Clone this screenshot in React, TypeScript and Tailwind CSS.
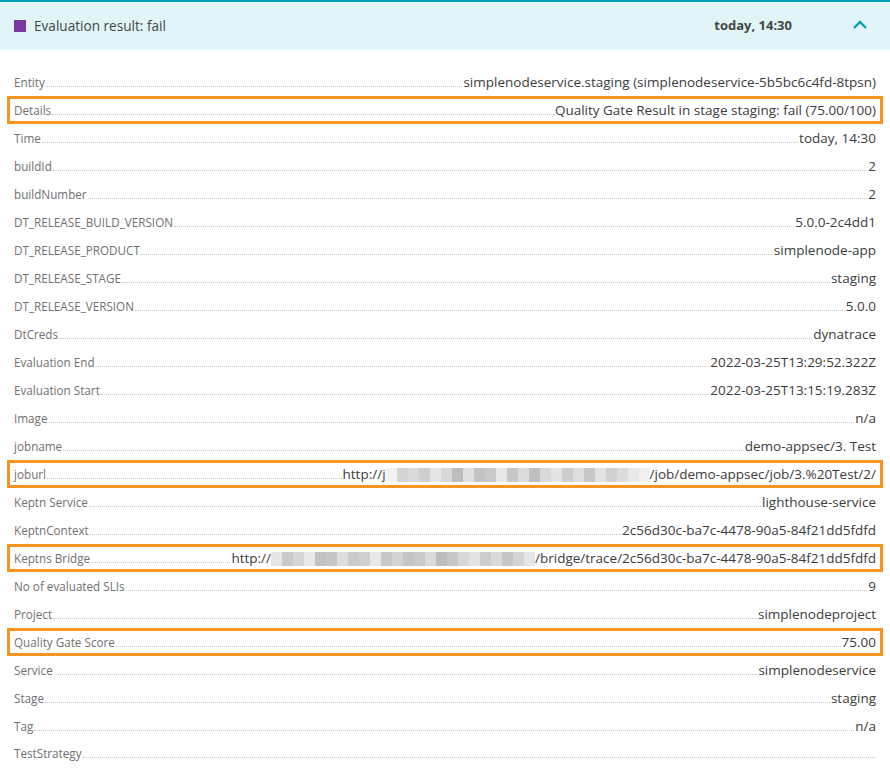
import React from 'react';

type Row = { label: string; value: React.ReactNode; hl?: boolean };

// pixelated stand-in for the redacted host name
const Redacted: React.FC<{ shades: string[] }> = ({ shades }) => (
  <span className="inline-flex h-[14px] align-middle">
    {shades.map((c, i) => (
      <span key={i} className="h-full w-[11px]" style={{ background: c }} />
    ))}
  </span>
);

const jobShades = ['#f2f2f2', '#d4d4d4', '#dadada', '#cfcfcf', '#e6e6e6', '#d8d8d8', '#bdbdbd', '#e0e0e0', '#c4c4c4', '#c9c9c9', '#e8e8e8', '#c7c7c7', '#dcdcdc', '#bfbfbf', '#d9d9d9', '#e4e4e4', '#cdcdcd', '#dddddd', '#c8c8c8', '#e2e2e2', '#d1d1d1', '#dcdcdc', '#e9e9e9', '#f0f0f0'];
const bridgeShades = ['#e6e6e6', '#c9c9c9', '#d6d6d6', '#e9e9e9', '#c2c2c2', '#c6c6c6', '#dedede', '#cbcbcb', '#cfcfcf', '#e8e8e8', '#c8c8c8', '#d3d3d3', '#c5c5c5', '#cacaca', '#dadada', '#bdbdbd', '#c7c7c7', '#d8d8d8', '#e3e3e3', '#cdcdcd', '#d9d9d9', '#c6c6c6', '#d4d4d4', '#e6e6e6'];

const rows: Row[] = [
  { label: 'Entity', value: 'simplenodeservice.staging (simplenodeservice-5b5bc6c4fd-8tpsn)' },
  { label: 'Details', value: 'Quality Gate Result in stage staging: fail (75.00/100)', hl: true },
  { label: 'Time', value: 'today, 14:30' },
  { label: 'buildId', value: '2' },
  { label: 'buildNumber', value: '2' },
  { label: 'DT_RELEASE_BUILD_VERSION', value: '5.0.0-2c4dd1' },
  { label: 'DT_RELEASE_PRODUCT', value: 'simplenode-app' },
  { label: 'DT_RELEASE_STAGE', value: 'staging' },
  { label: 'DT_RELEASE_VERSION', value: '5.0.0' },
  { label: 'DtCreds', value: 'dynatrace' },
  { label: 'Evaluation End', value: '2022-03-25T13:29:52.322Z' },
  { label: 'Evaluation Start', value: '2022-03-25T13:15:19.283Z' },
  { label: 'Image', value: 'n/a' },
  { label: 'jobname', value: 'demo-appsec/3. Test' },
  {
    label: 'joburl',
    hl: true,
    value: (
      <>
        http://j<Redacted shades={jobShades} />/job/demo-appsec/job/3.%20Test/2/
      </>
    ),
  },
  { label: 'Keptn Service', value: 'lighthouse-service' },
  { label: 'KeptnContext', value: '2c56d30c-ba7c-4478-90a5-84f21dd5fdfd' },
  {
    label: 'Keptns Bridge',
    hl: true,
    value: (
      <>
        http://<Redacted shades={bridgeShades} />/bridge/trace/2c56d30c-ba7c-4478-90a5-84f21dd5fdfd
      </>
    ),
  },
  { label: 'No of evaluated SLIs', value: '9' },
  { label: 'Project', value: 'simplenodeproject' },
  { label: 'Quality Gate Score', value: '75.00', hl: true },
  { label: 'Service', value: 'simplenodeservice' },
  { label: 'Stage', value: 'staging' },
  { label: 'Tag', value: 'n/a' },
  { label: 'TestStrategy', value: '' },
];

export default function App() {
  return (
    <div className="w-[890px] h-[769px] bg-white overflow-hidden" style={{ fontFamily: '"Open Sans", sans-serif' }}>
      <div className="h-[50px] bg-[#e1f5f9] border-t-[2px] border-[#00a1b2] flex items-center pl-[14px] pr-[22px]">
        <span className="w-[12px] h-[12px] bg-[#7c38a1] mr-[8px]" />
        <span className="text-[13.6px] text-[#454646] flex-1">Evaluation result: fail</span>
        <span className="text-[13px] font-bold text-[#454646] mr-[58px]">today, 14:30</span>
        <svg width="16" height="10" viewBox="0 0 16 10" className="mt-[-2px] ml-[2px]">
          <path d="M2 8 L8 2 L14 8" fill="none" stroke="#00a1b2" strokeWidth="2.4" />
        </svg>
      </div>

      <div className="pt-[18px]">
        {rows.map((r) => (
          <div
            key={r.label}
            className={`mx-[7px] h-[28px] px-[4px] border-[3px] flex items-center ${r.hl ? 'border-[#f7931e]' : 'border-transparent'}`}
          >
            <div className="flex items-baseline w-full">
              <span className="text-[11.7px] text-[#707070] whitespace-nowrap">{r.label}</span>
              <span className="flex-1 border-b border-dotted border-[#c4c4c4] mx-[1px]" />
              <span className="text-[13.5px] text-[#3c3c3c] whitespace-nowrap">{r.value}</span>
            </div>
          </div>
        ))}
      </div>
    </div>
  );
}
